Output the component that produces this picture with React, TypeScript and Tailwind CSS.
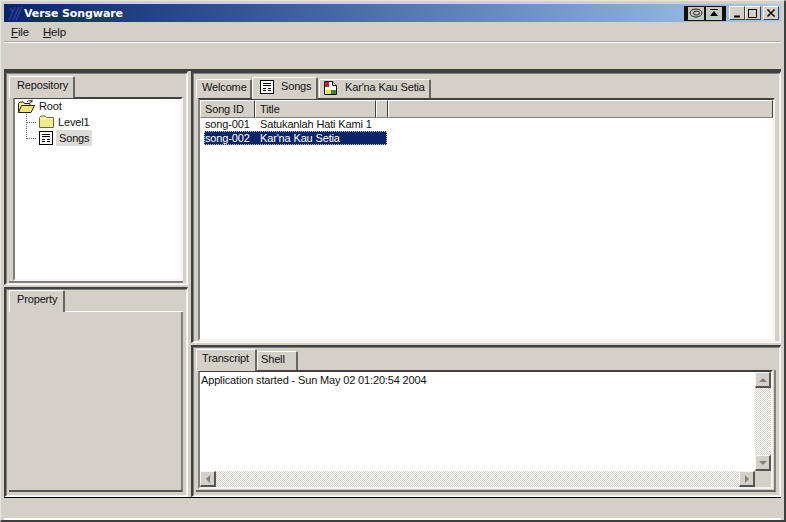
import React from "react";

const F = "font-['Liberation_Sans',Arial,sans-serif] tracking-[-0.15px]";

function Sunken({ className = "", children }: { className?: string; children?: React.ReactNode }) {
  return (
    <div className={`border-t-2 border-l-2 border-t-[#404040] border-l-[#404040] border-r border-b border-r-white border-b-white ${className}`}>
      <div className="w-full h-full flex flex-col border-t border-l border-t-[#808080] border-l-[#808080] border-r border-b border-r-[#f0efeb] border-b-[#f0efeb] min-h-0">{children}</div>
    </div>
  );
}

function Tab({ label, active, icon, className = "" }: { label: string; active?: boolean; icon?: React.ReactNode; className?: string }) {
  return (
    <div className={`flex items-center gap-[7px] shrink-0 whitespace-nowrap rounded-t-[2px] bg-[#d4d0c8] text-[11px] leading-none text-[#111] border-t border-l border-white border-r-2 border-r-[#666] ${active ? "h-[22px] -mb-px z-10 pb-[4px]" : "h-[19px] pb-[3px]"} ${className}`}>
      {icon}
      <span>{label}</span>
    </div>
  );
}

function ListIcon() {
  return (
    <svg width="14" height="14" viewBox="0 0 14 14" className="shrink-0">
      <rect x="0.5" y="0.5" width="13" height="13" fill="#fff" stroke="#000" />
      <path d="M3 3.5h8M3 5.5h8M3 8.5h3M8 8.5h3M3 10.5h3M8 10.5h3" stroke="#000" strokeWidth="1" />
    </svg>
  );
}

function FolderClosed() {
  return (
    <svg width="15" height="14" viewBox="0 0 15 14" className="shrink-0">
      <path d="M0.5 12.5V2.5L2 1h4l1.500 1.500h7v10z" fill="#f2ec8c" stroke="#6b6b2a" />
      <path d="M1.500 3.500h12" stroke="#fffde0" />
    </svg>
  );
}

function FolderOpen() {
  return (
    <svg width="17" height="15" viewBox="0 0 17 15" className="shrink-0">
      <path d="M0.500 13.500V4.500L2 3h3.500l1 1.500H12v2" fill="#f5ec8a" stroke="#222" />
      <path d="M0.500 13.500 3.500 6.500H16.500L13 13.500z" fill="#f0e678" stroke="#222" />
      <path d="M9 3c1.500-2 3.500-2 5-0.500M14 0.500v2.500h-2.500" fill="none" stroke="#222" />
    </svg>
  );
}

function DocIcon() {
  return (
    <svg width="15" height="16" viewBox="0 0 15 16" className="shrink-0">
      <path d="M1.500 1.500h8l4 4v9h-12z" fill="#fff" stroke="#111" />
      <rect x="2" y="2" width="4" height="5" fill="#c8202a" />
      <rect x="8" y="10" width="5" height="4" fill="#3a8a3a" />
      <rect x="3" y="10" width="5" height="4" fill="#f0e040" />
      <path d="M9.500 1.500v4h4" fill="#ddd" stroke="#111" />
    </svg>
  );
}

function ScrollBtn({ dir, className = "" }: { dir: "up" | "down" | "left" | "right"; className?: string }) {
  const pts = { up: "3,9 11,9 7,5", down: "3,5 11,5 7,9", left: "9,3 9,11 5,7", right: "5,3 5,11 9,7" }[dir];
  return (
    <div className={`w-[16px] h-[16px] shrink-0 bg-[#d4d0c8] border-t border-l border-t-[#f4f3f0] border-l-[#f4f3f0] border-r-2 border-b-2 border-r-[#555] border-b-[#555] ${className}`}>
      <svg width="14" height="14" viewBox="0 0 14 14"><polygon points={pts} fill="#808080" /></svg>
    </div>
  );
}

const dither = "bg-[repeating-conic-gradient(#d4d0c8_0%_25%,#ffffff_0%_50%)] bg-[length:2px_2px]";

function HeaderCell({ label, w, grow }: { label?: string; w?: string; grow?: boolean }) {
  return (
    <div className={`h-[18px] shrink-0 flex items-center pl-[4px] text-[11px] text-[#111] bg-[#d4d0c8] border-t border-l border-t-white border-l-white border-r border-b border-r-[#404040] border-b-[#808080] ${w ?? ""} ${grow ? "grow" : ""}`}>
      {label}
    </div>
  );
}

function CaptionButton({ children }: { children: React.ReactNode }) {
  return (
    <div className="w-[16px] h-[14px] bg-[#d4d0c8] border-t border-l border-t-white border-l-white border-r border-b border-r-[#404040] border-b-[#404040] flex items-center justify-center shrink-0">
      {children}
    </div>
  );
}

export default function App() {
  return (
    <div className={`${F} w-[786px] h-[522px] overflow-hidden bg-[#d4d0c8] border-t border-l border-t-[#e8e6e1] border-l-[#e8e6e1] border-r-2 border-b-2 border-r-[#404040] border-b-[#404040] flex flex-col pt-[3px] pl-[3px] pr-[3px] select-none`}>
      {/* title bar */}
      <div className="h-[18px] shrink-0 flex items-center justify-between bg-gradient-to-r from-[#0a246a] to-[#a6caf0] pl-[3px] pr-[2px]">
        <div className="flex items-center gap-[1px]">
          <svg width="16" height="16" viewBox="0 0 16 16" className="shrink-0">
            <path d="M2 15 8 2M6 15 12 2M9 15 15 2M3 3l3 4" stroke="#2a3f96" strokeWidth="1.500" fill="none" />
          </svg>
          <span className="font-['DejaVu_Sans',sans-serif] font-bold text-[11px] leading-none tracking-[-0.1px] text-white">Verse Songware</span>
        </div>
        <div className="flex items-center">
          <div className="flex items-center h-[15px] bg-[#111] px-[4px] gap-px mr-[3px]">
            <div className="w-[16px] h-[13px] bg-[#c8c6c0] flex items-center justify-center">
              <svg width="14" height="10" viewBox="0 0 14 10"><ellipse cx="7" cy="5" rx="6" ry="4" fill="none" stroke="#222" /><ellipse cx="7.500" cy="5" rx="3" ry="2" fill="none" stroke="#222" /></svg>
            </div>
            <div className="w-[16px] h-[13px] bg-[#c8c6c0] flex items-center justify-center ml-[1px]">
              <svg width="10" height="8" viewBox="0 0 10 8"><path d="M1 0.500h8" stroke="#000" /><polygon points="5,2 1,7 9,7" fill="#000" /></svg>
            </div>
          </div>
          <CaptionButton><svg width="10" height="10" viewBox="0 0 10 10"><path d="M2 8.500h6" stroke="#000" strokeWidth="2" /></svg></CaptionButton>
          <CaptionButton><svg width="10" height="10" viewBox="0 0 10 10"><path d="M0.500 1.500h8v8h-8z" fill="none" stroke="#000" /><path d="M0 1.500h9" stroke="#000" /></svg></CaptionButton>
          <div className="w-[2px]" />
          <CaptionButton><svg width="10" height="10" viewBox="0 0 10 10"><path d="M1.500 1.500l7 7M8.500 1.500l-7 7" stroke="#000" strokeWidth="1.500" /></svg></CaptionButton>
        </div>
      </div>

      {/* menu */}
      <div className="h-[19px] shrink-0 flex items-center gap-[14px] pl-[7px] pt-[2px] text-[11.5px] text-[#111]">
        <span><span className="underline">F</span>ile</span>
        <span><span className="underline">H</span>elp</span>
      </div>
      <div className="h-[2px] shrink-0 border-t border-t-[#a8a69f] border-b border-b-white" />
      {/* toolbar */}
      <div className="h-[26px] shrink-0" />

      {/* workspace */}
      <div className="grow min-h-0 flex gap-[3px] border-t-2 border-t-[#404040]">
        {/* left */}
        <div className="w-[184px] shrink-0 flex flex-col gap-[2px]">
          <Sunken className="h-[214px] shrink-0">
            <div className="flex flex-col grow min-h-0 pt-[1px] pl-[2px] pr-[3px]">
              <div className="h-[22px] shrink-0 flex items-end">
                <Tab label="Repository" active className="w-[66px] pl-[7px]" />
              </div>
              <div className="grow min-h-0 flex border-b-2 border-b-[#808080]">
                <div className="grow ml-[4px] bg-white border-2 border-t-[#404040] border-l-[#808080] border-r-[#f4f3f0] border-b-[#f4f3f0] flex flex-col pl-[3px] text-[11px] leading-none text-[#111]">
                  <div className="h-[16px] -mt-px flex items-center gap-[4px]"><FolderOpen /><span>Root</span></div>
                  <div className="flex flex-col ml-[8px] border-l border-dotted border-l-[#666] h-[25px]">
                    <div className="h-[16px] shrink-0 flex items-center gap-[3px]">
                      <div className="w-[9px] border-t border-dotted border-[#666]" />
                      <FolderClosed /><span className="ml-[1px]">Level1</span>
                    </div>
                    <div className="h-[16px] shrink-0 flex items-center gap-[3px]">
                      <div className="w-[9px] border-t border-dotted border-[#666]" />
                      <ListIcon /><span className="bg-[#dcdbd8] px-[3px] h-[16px] flex items-center">Songs</span>
                    </div>
                  </div>
                </div>
              </div>
            </div>
          </Sunken>
          <Sunken className="grow min-h-0">
            <div className="flex flex-col grow min-h-0 pt-[1px] pl-[2px] pr-[3px] pb-[3px]">
              <div className="h-[21px] shrink-0 flex items-end border-b border-b-white">
                <Tab label="Property" active className="w-[56px] pl-[7px]" />
              </div>
              <div className="grow border-r-2 border-r-[#808080] border-b-2 border-b-[#555]" />
            </div>
          </Sunken>
        </div>

        {/* right */}
        <div className="grow min-w-0 flex flex-col gap-[2px]">
          <Sunken className="h-[272px] shrink-0">
            <div className="flex flex-col grow min-h-0 pt-[1px] pl-[2px] pr-[3px]">
              <div className="h-[23px] shrink-0 flex items-end">
                <Tab label="Welcome" className="w-[56px] pl-[5px]" />
                <Tab label="Songs" active icon={<ListIcon />} className="w-[66px] pl-[7px]" />
                <Tab label="Kar'na Kau Setia" icon={<DocIcon />} className="w-[112px] ml-px pl-[3px] gap-[5px]" />
              </div>
              <div className="grow min-h-0 ml-[2px] mr-[1px] bg-white border-2 border-t-[#404040] border-l-[#808080] border-r-[#f4f3f0] border-b-[#f4f3f0] flex flex-col text-[11px] leading-none text-[#111]">
                <div className="flex shrink-0">
                  <HeaderCell label="Song ID" w="w-[55px]" />
                  <HeaderCell label="Title" w="w-[121px]" />
                  <HeaderCell w="w-[12px]" />
                  <HeaderCell grow />
                </div>
                <div className="flex flex-col pl-[4px] -mt-px">
                  <div className="h-[14px] flex items-center w-[183px]">
                    <span className="w-[56px] pl-px shrink-0">song-001</span><span>Satukanlah Hati Kami 1</span>
                  </div>
                  <div className="h-[14px] flex items-center w-[183px] bg-[#0a246a] text-white outline outline-1 -outline-offset-1 outline-dotted outline-[#d4d0c8]">
                    <span className="w-[56px] pl-px shrink-0">song-002</span><span>Kar'na Kau Setia</span>
                  </div>
                </div>
              </div>
            </div>
          </Sunken>
          <Sunken className="grow min-h-0">
            <div className="flex flex-col grow min-h-0 pl-[2px] pr-[3px] pb-[3px]">
              <div className="h-[22px] shrink-0 flex items-end">
                <Tab label="Transcript" active className="w-[61px] pl-[5px]" />
                <Tab label="Shell" className="w-[41px] pl-[3px]" />
              </div>
              <div className="grow min-h-0 flex border-r-2 border-r-[#808080] border-b-2 border-b-[#666] pr-px pb-px">
                <div className="grow min-w-0 ml-[2px] bg-white border-2 border-t-[#404040] border-l-[#808080] border-r-[#f4f3f0] border-b-[#f4f3f0] flex flex-col text-[11px] text-[#111]">
                  <div className="grow min-h-0 flex">
                    <div className="grow pl-[1px] leading-[16px]">Application started - Sun May 02 01:20:54 2004</div>
                    <div className={`w-[16px] shrink-0 flex flex-col justify-between ${dither}`}>
                      <ScrollBtn dir="up" />
                      <ScrollBtn dir="down" />
                    </div>
                  </div>
                  <div className="h-[16px] shrink-0 flex">
                    <div className={`grow flex justify-between ${dither}`}>
                      <ScrollBtn dir="left" />
                      <ScrollBtn dir="right" />
                    </div>
                    <div className="w-[16px] shrink-0 bg-[#d4d0c8]" />
                  </div>
                </div>
              </div>
            </div>
          </Sunken>
        </div>
      </div>

      {/* status */}
      <div className="h-[23px] shrink-0 border-t border-t-black border-b-2 border-b-white" />
    </div>
  );
}
